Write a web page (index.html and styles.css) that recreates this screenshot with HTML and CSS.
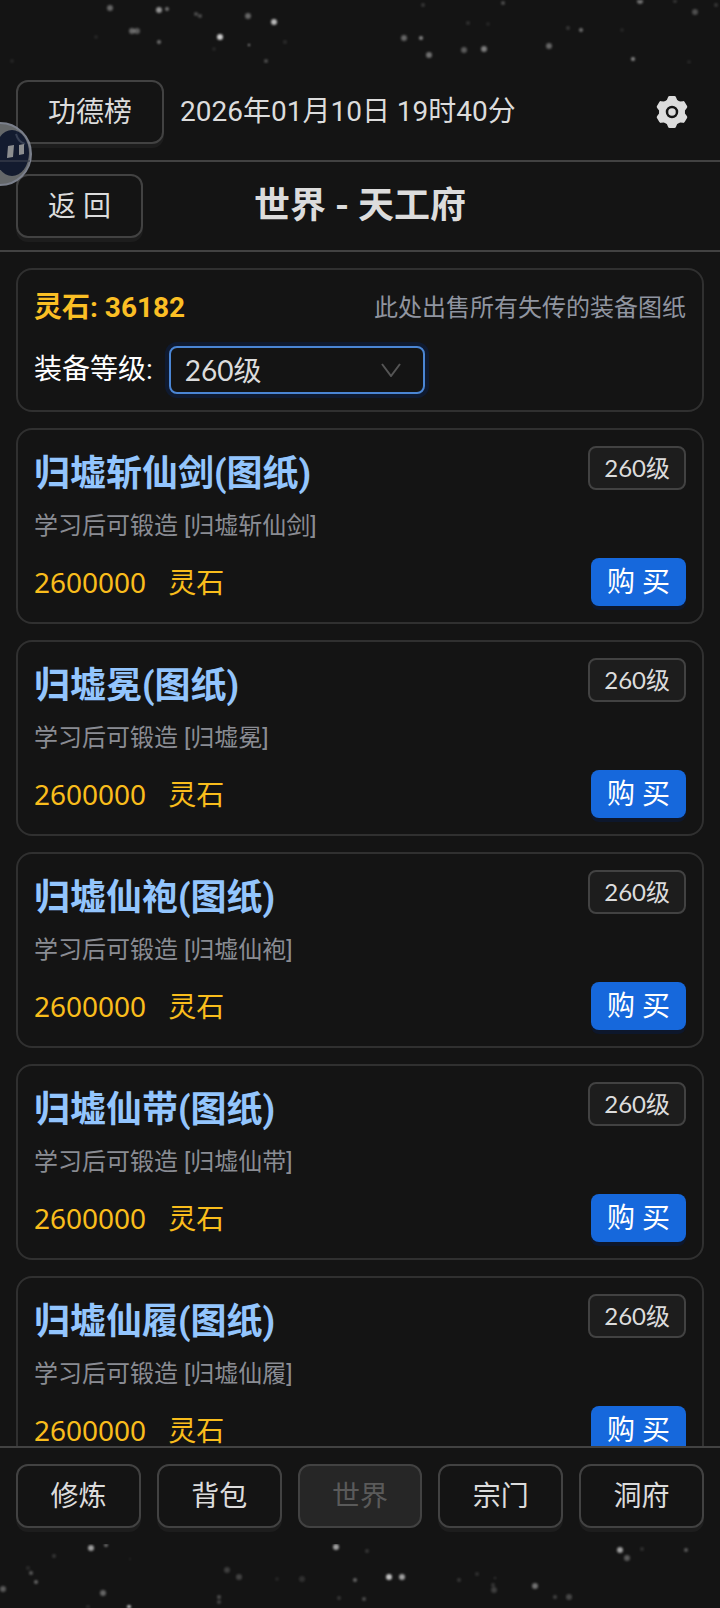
FILE: index.html
```html
<!DOCTYPE html>
<html lang="zh-CN">
<head>
    <meta charset="UTF-8">
    <meta name="viewport" content="width=device-width, initial-scale=1.0">
    <title>世界 - 天工府</title>
    <link rel="stylesheet" href="styles.css">
</head>
<body>
    <div class="stars">
        <svg viewBox="0 0 720 64" preserveAspectRatio="xMidYMid slice" fill="#ffffff" aria-hidden="true">
            <circle cx="110" cy="8" r="3" opacity=".35"/>
            <circle cx="159" cy="10" r="3" opacity=".55"/>
            <circle cx="167" cy="9" r="2" opacity=".4"/>
            <circle cx="196" cy="14" r="2" opacity=".25"/>
            <circle cx="200" cy="16" r="2" opacity=".25"/>
            <circle cx="248" cy="16" r="3" opacity=".35"/>
            <circle cx="274" cy="22" r="3" opacity=".7"/>
            <circle cx="132" cy="31" r="3" opacity=".35"/>
            <circle cx="137" cy="31" r="3" opacity=".3"/>
            <circle cx="220" cy="37" r="3" opacity=".8"/>
            <circle cx="159" cy="42" r="2" opacity=".4"/>
            <circle cx="249" cy="45" r="1" opacity=".7"/>
            <circle cx="96" cy="37" r="2" opacity=".08"/>
            <circle cx="285" cy="42" r="2" opacity=".1"/>
            <circle cx="214" cy="49" r="2" opacity=".08"/>
            <circle cx="266" cy="61" r="2" opacity=".25"/>
            <circle cx="12" cy="61" r="2" opacity=".08"/>
            <circle cx="423" cy="5" r="2" opacity=".15"/>
            <circle cx="503" cy="3" r="2" opacity=".25"/>
            <circle cx="640" cy="1" r="3" opacity=".4"/>
            <circle cx="675" cy="1" r="2" opacity=".15"/>
            <circle cx="695" cy="12" r="3" opacity=".25"/>
            <circle cx="716" cy="5" r="2" opacity=".15"/>
            <circle cx="468" cy="23" r="2" opacity=".12"/>
            <circle cx="488" cy="24" r="2" opacity=".08"/>
            <circle cx="404" cy="38" r="3" opacity=".35"/>
            <circle cx="421" cy="38" r="2" opacity=".5"/>
            <circle cx="429" cy="55" r="3" opacity=".4"/>
            <circle cx="464" cy="50" r="3" opacity=".3"/>
            <circle cx="484" cy="49" r="3" opacity=".45"/>
            <circle cx="549" cy="46" r="3" opacity=".35"/>
            <circle cx="568" cy="28" r="2" opacity=".15"/>
            <circle cx="581" cy="30" r="2" opacity=".4"/>
            <circle cx="622" cy="30" r="2" opacity=".08"/>
            <circle cx="633" cy="59" r="2" opacity=".5"/>
            <circle cx="689" cy="62" r="2" opacity=".08"/>
        </svg>
    </div>

    <header class="top-bar">
        <button class="btn" type="button">功德榜</button>
        <time class="clock" datetime="2026-01-10T19:40">2026年01月10日 19时40分</time>
        <button class="icon-btn" type="button" aria-label="设置">
            <svg viewBox="0 0 32 32" width="32" height="32" aria-hidden="true">
                <g fill="currentColor">
                    <circle cx="16" cy="16" r="13"/>
                    <path id="tooth" d="M10 6 L12 1.200 Q12.400 0 13.600 0 H18.400 Q19.600 0 20 1.200 L22 6 Z"/>
                    <use href="#tooth" transform="rotate(60 16 16)"/>
                    <use href="#tooth" transform="rotate(120 16 16)"/>
                    <use href="#tooth" transform="rotate(180 16 16)"/>
                    <use href="#tooth" transform="rotate(240 16 16)"/>
                    <use href="#tooth" transform="rotate(300 16 16)"/>
                </g>
                <circle cx="16" cy="16" r="5" fill="none" stroke="#141414" stroke-width="2.500"/>
            </svg>
        </button>
    </header>

    <div class="title-bar">
        <button class="btn" type="button">返 回</button>
        <h1>世界 - 天工府</h1>
    </div>

    <main class="content">
        <section class="card">
            <div class="row">
                <strong class="balance">灵石: 36182</strong>
                <span class="hint">此处出售所有失传的装备图纸</span>
            </div>
            <div class="filter">
                <label for="level">装备等级:</label>
                <div class="select-wrap">
                    <select id="level">
                        <option>260级</option>
                    </select>
                    <svg class="arrow" viewBox="0 0 20 14" width="20" height="14" aria-hidden="true">
                        <path d="M1 1 L10 13 L19 1" fill="none" stroke="currentColor" stroke-width="2"/>
                    </svg>
                </div>
            </div>
        </section>

        <article class="card">
            <div class="item-head">
                <h2>归墟斩仙剑(图纸)</h2>
                <span class="tag">260级</span>
            </div>
            <p class="desc">学习后可锻造 [归墟斩仙剑]</p>
            <div class="row">
                <div class="price"><span>2600000</span><span>灵石</span></div>
                <button class="buy" type="button">购 买</button>
            </div>
        </article>

        <article class="card">
            <div class="item-head">
                <h2>归墟冕(图纸)</h2>
                <span class="tag">260级</span>
            </div>
            <p class="desc">学习后可锻造 [归墟冕]</p>
            <div class="row">
                <div class="price"><span>2600000</span><span>灵石</span></div>
                <button class="buy" type="button">购 买</button>
            </div>
        </article>

        <article class="card">
            <div class="item-head">
                <h2>归墟仙袍(图纸)</h2>
                <span class="tag">260级</span>
            </div>
            <p class="desc">学习后可锻造 [归墟仙袍]</p>
            <div class="row">
                <div class="price"><span>2600000</span><span>灵石</span></div>
                <button class="buy" type="button">购 买</button>
            </div>
        </article>

        <article class="card">
            <div class="item-head">
                <h2>归墟仙带(图纸)</h2>
                <span class="tag">260级</span>
            </div>
            <p class="desc">学习后可锻造 [归墟仙带]</p>
            <div class="row">
                <div class="price"><span>2600000</span><span>灵石</span></div>
                <button class="buy" type="button">购 买</button>
            </div>
        </article>

        <article class="card">
            <div class="item-head">
                <h2>归墟仙履(图纸)</h2>
                <span class="tag">260级</span>
            </div>
            <p class="desc">学习后可锻造 [归墟仙履]</p>
            <div class="row">
                <div class="price"><span>2600000</span><span>灵石</span></div>
                <button class="buy" type="button">购 买</button>
            </div>
        </article>
    </main>

    <nav class="tabs">
        <button class="btn" type="button">修炼</button>
        <button class="btn" type="button">背包</button>
        <button class="btn" type="button" disabled>世界</button>
        <button class="btn" type="button">宗门</button>
        <button class="btn" type="button">洞府</button>
    </nav>

    <div class="stars">
        <svg viewBox="0 0 720 64" preserveAspectRatio="xMidYMid slice" fill="#ffffff" aria-hidden="true">
            <circle cx="91" cy="4" r="3" opacity=".6"/>
            <circle cx="106" cy="1" r="2" opacity=".4"/>
            <circle cx="336" cy="3" r="3" opacity=".6"/>
            <circle cx="54" cy="12" r="2" opacity=".15"/>
            <circle cx="28" cy="24" r="2" opacity=".1"/>
            <circle cx="31" cy="29" r="2" opacity=".3"/>
            <circle cx="36" cy="38" r="2" opacity=".35"/>
            <circle cx="3" cy="45" r="3" opacity=".3"/>
            <circle cx="103" cy="49" r="3" opacity=".35"/>
            <circle cx="129" cy="63" r="2" opacity=".8"/>
            <circle cx="88" cy="63" r="2" opacity=".1"/>
            <circle cx="130" cy="15" r="1" opacity=".1"/>
            <circle cx="227" cy="26" r="3" opacity=".18"/>
            <circle cx="239" cy="33" r="3" opacity=".2"/>
            <circle cx="219" cy="53" r="2" opacity=".25"/>
            <circle cx="219" cy="58" r="2" opacity=".2"/>
            <circle cx="277" cy="35" r="2" opacity=".08"/>
            <circle cx="302" cy="35" r="3" opacity=".12"/>
            <circle cx="355" cy="36" r="2" opacity=".35"/>
            <circle cx="339" cy="54" r="2" opacity=".15"/>
            <circle cx="367" cy="7" r="2" opacity=".15"/>
            <circle cx="389" cy="33" r="3" opacity=".75"/>
            <circle cx="402" cy="33" r="3" opacity=".6"/>
            <circle cx="364" cy="55" r="2" opacity=".25"/>
            <circle cx="459" cy="36" r="2" opacity=".15"/>
            <circle cx="477" cy="30" r="2" opacity=".12"/>
            <circle cx="495" cy="34" r="1" opacity=".2"/>
            <circle cx="493" cy="41" r="2" opacity=".15"/>
            <circle cx="494" cy="46" r="3" opacity=".18"/>
            <circle cx="535" cy="42" r="3" opacity=".4"/>
            <circle cx="555" cy="53" r="2" opacity=".2"/>
            <circle cx="569" cy="53" r="3" opacity=".22"/>
            <circle cx="620" cy="6" r="3" opacity=".6"/>
            <circle cx="627" cy="14" r="3" opacity=".3"/>
            <circle cx="642" cy="5" r="2" opacity=".12"/>
            <circle cx="686" cy="6" r="2" opacity=".3"/>
        </svg>
    </div>

    <!-- floating assistant ball, half hidden at the left edge -->
    <svg class="float-ball" viewBox="0 0 34 68" width="34" height="68" aria-hidden="true">
        <circle cx="0" cy="34" r="31" fill="#6d7073"/>
        <circle cx="0" cy="34" r="31" fill="none" stroke="#868b98" stroke-width="2"/>
        <ellipse cx="12" cy="33" rx="17" ry="23" fill="#131c33"/>
        <path d="M16 14 Q18 22 25 24" fill="none" stroke="#3a4358" stroke-width="2"/>
        <path d="M0 41 H30" stroke="#3a3f4c" stroke-width="2" opacity=".6"/>
        <path d="M8 26 L14 25 L13 37 L7 38 Z M19 25 L24 24 L24 34 L19 35 Z" fill="#9a9c9e"/>
    </svg>
</body>
</html>
```
FILE: styles.css
```css
* {
    box-sizing: border-box;
}

body {
    margin: 0;
    height: 100vh;
    display: flex;
    flex-direction: column;
    background: #141414;
    color: #dcdcdc;
    font-family: Roboto, "Noto Sans CJK SC", sans-serif;
    font-size: 28px;
    line-height: 44px;
}

h1, h2, p {
    margin: 0;
}

button, select {
    font: inherit;
    color: inherit;
}

.stars {
    flex: none;
    height: 64px;
    overflow: hidden;
}

.stars svg {
    display: block;
    width: 100%;
    height: 100%;
    filter: blur(1px);
}

.top-bar {
    flex: none;
    display: flex;
    align-items: center;
    gap: 16px;
    padding: 16px;
    border-bottom: 2px solid #424242;
}

.btn {
    height: 64px;
    padding: 2px 30px 0;
    background: #141414;
    border: 2px solid #424242;
    border-radius: 12px;
    box-shadow: 0 4px 0 rgba(255, 255, 255, 0.04);
    cursor: pointer;
}

.btn:disabled {
    background: #262626;
    color: #5a5a5a;
    box-shadow: none;
    cursor: not-allowed;
}

.icon-btn {
    display: flex;
    margin-left: auto;
    padding: 0 16px;
    background: none;
    border: none;
    cursor: pointer;
}

.title-bar {
    flex: none;
    display: grid;
    grid-template-columns: 1fr auto 1fr;
    align-items: center;
    padding: 12px 16px;
    border-bottom: 2px solid #424242;
}

.title-bar .btn {
    justify-self: start;
}

h1 {
    font-size: 36px;
    font-weight: 700;
}

.content {
    flex: 1;
    min-height: 0;
    display: flex;
    flex-direction: column;
    gap: 16px;
    padding: 16px;
    overflow: hidden;
}

.card {
    flex: none;
    padding: 16px;
    border: 2px solid #303030;
    border-radius: 16px;
}

.row {
    display: flex;
    align-items: center;
    justify-content: space-between;
}

.balance {
    color: #fbbf24;
}

.hint {
    font-size: 24px;
    color: #9095a0;
}

.filter {
    display: flex;
    align-items: center;
    gap: 16px;
    margin-top: 16px;
    color: #ffffff;
}

.select-wrap {
    position: relative;
    width: 256px;
    height: 48px;
    color: #dcdcdc;
}

.select-wrap select {
    display: block;
    width: 100%;
    height: 100%;
    padding: 0 14px;
    appearance: none;
    background: #141414;
    border: 2px solid #4b86d4;
    border-radius: 8px;
    box-shadow: 0 0 0 4px #0f1a30;
    font-family: Lato, "Noto Sans CJK SC", sans-serif;
    outline: none;
}

.arrow {
    position: absolute;
    top: 17px;
    right: 24px;
    color: #555555;
    pointer-events: none;
}

.item-head {
    display: flex;
    align-items: flex-start;
    justify-content: space-between;
}

h2 {
    font-size: 36px;
    font-weight: 700;
    line-height: 56px;
    color: #93c5fd;
}

.tag {
    padding: 0 14px;
    background: #1d1d1d;
    border: 2px solid #424242;
    border-radius: 8px;
    font-family: Lato, "Noto Sans CJK SC", sans-serif;
    font-size: 24px;
    line-height: 40px;
}

.desc {
    margin: 4px 0 12px;
    font-size: 24px;
    line-height: 40px;
    color: #8a8c93;
}

.price {
    display: flex;
    gap: 22px;
    font-family: "Noto Sans", "Noto Sans CJK SC", sans-serif;
    color: #f9bd1c;
}

.buy {
    height: 48px;
    padding: 2px 16px 0;
    background: #1668dc;
    border: none;
    border-radius: 8px;
    box-shadow: 0 4px 0 rgba(0, 30, 90, 0.35);
    color: #ffffff;
    cursor: pointer;
}

.tabs {
    flex: none;
    display: grid;
    grid-template-columns: repeat(5, 1fr);
    gap: 16px;
    padding: 16px;
    border-top: 2px solid #424242;
}

.tabs .btn {
    padding: 2px 0 0;
}

.float-ball {
    position: absolute;
    top: 120px;
    left: 0;
    opacity: 0.9;
}
```
